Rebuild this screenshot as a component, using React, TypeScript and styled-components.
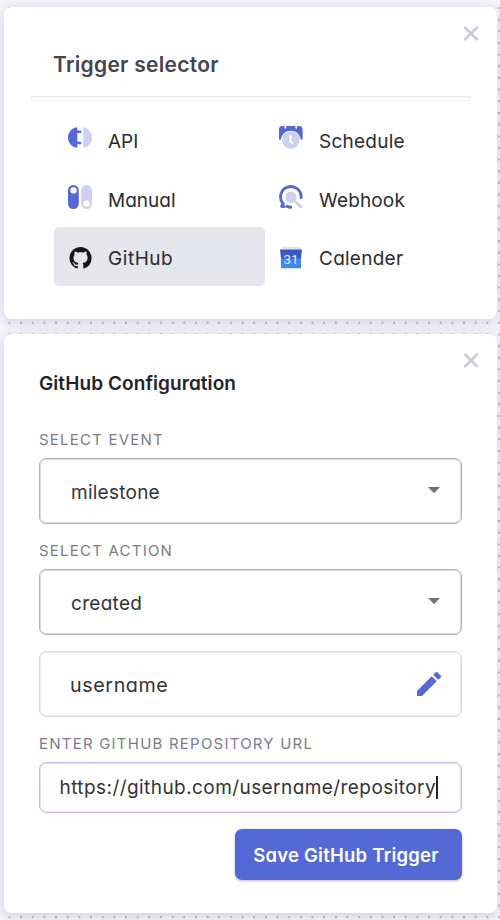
import React from "react";
import styled, { createGlobalStyle } from "styled-components";

const GlobalStyle = createGlobalStyle`
  *, *::before, *::after { box-sizing: border-box; }
  body {
    margin: 0;
    background: #f5f6fb;
    font-family: Inter, "Liberation Sans", sans-serif;
    font-feature-settings: "cv11" 1;
  }
`;

const Canvas = styled.main`
  width: 500px;
  height: 920px;
  overflow: hidden;
  padding: 7px 3px 0 4px;
  display: flex;
  flex-direction: column;
  gap: 15px;
  background-color: #f5f6fb;
  background-image: radial-gradient(circle, #a9a9b4 0.6px, transparent 1.1px);
  background-size: 11.67px 11.67px;
  background-position: 3.6px 2.2px;
`;

const Card = styled.section<{ $height: number; $pad: string }>`
  position: relative;
  flex: none;
  height: ${(p) => p.$height}px;
  padding: ${(p) => p.$pad};
  background: #fff;
  border-radius: 8px;
  box-shadow: 0 3px 13px rgba(50, 48, 95, 0.2);
  display: flex;
  flex-direction: column;
`;

const CloseButton = styled.button`
  position: absolute;
  top: 18px;
  right: 18px;
  width: 16px;
  height: 16px;
  padding: 0;
  border: 0;
  background: none;
  line-height: 0;
`;

const PanelTitle = styled.h1`
  margin: 0 0 0 22px;
  height: 30px;
  font-size: 21px;
  line-height: 30px;
  font-weight: 600;
  letter-spacing: 0.28px;
  color: #45444f;
`;

const Divider = styled.hr`
  width: 440px;
  height: 5px;
  margin: 16px 0 9.5px;
  border: 1px solid #f1f1f2;
  border-top: 2px solid #eeeeef;
  background: #fff;
`;

const TriggerGrid = styled.div`
  margin-left: 23px;
  display: grid;
  grid-template-columns: 211px 211px;
  grid-auto-rows: 58.4px;
`;

const TriggerItem = styled.button<{ $active?: boolean }>`
  display: flex;
  align-items: center;
  padding: 0 0 0 14px;
  gap: 16px;
  border: 0;
  border-radius: 5px;
  background: ${(p) => (p.$active ? "#e5e6eb" : "transparent")};
  font-family: inherit;
  font-feature-settings: inherit;
  text-align: left;
`;

const IconSlot = styled.span<{ $shift: number }>`
  width: 24px;
  height: 24px;
  line-height: 0;
  margin-top: ${(p) => p.$shift * 2}px;
`;

const TriggerName = styled.span<{ $track: number }>`
  font-size: 19px;
  line-height: 24px;
  margin-top: 5px;
  letter-spacing: ${(p) => p.$track}px;
  color: #2b2b31;
`;

const ConfigTitle = styled.h2`
  margin: 0;
  height: 24px;
  font-size: 19px;
  line-height: 24px;
  font-weight: 600;
  letter-spacing: 0.08px;
  color: #23232b;
`;

const FieldLabel = styled.label<{ $top: number }>`
  height: 16px;
  margin: ${(p) => p.$top}px 0 10px;
  font-size: 15px;
  line-height: 16px;
  letter-spacing: 1.22px;
  white-space: nowrap;
  color: #7b7c87;
`;

const FieldBox = styled.div<{ $tone: string; $inner: string; $height: number; $pad: string; $top?: number }>`
  flex: none;
  width: 423px;
  height: ${(p) => p.$height}px;
  margin-top: ${(p) => p.$top ?? 0}px;
  padding: ${(p) => p.$pad};
  display: flex;
  align-items: center;
  justify-content: space-between;
  border: 1px solid ${(p) => p.$tone};
  box-shadow: inset 0 0 0 1px ${(p) => p.$inner};
  border-radius: 7px;
`;

const FieldValue = styled.span<{ $track: number; $size?: number; $drop: number }>`
  display: flex;
  align-items: center;
  margin-top: ${(p) => p.$drop}px;
  font-size: ${(p) => p.$size ?? 19}px;
  line-height: 24px;
  letter-spacing: ${(p) => p.$track}px;
  white-space: nowrap;
  color: #333336;
`;

const Caret = styled.span`
  width: 1.5px;
  height: 23px;
  background: #222;
`;

const SaveButton = styled.button`
  align-self: flex-end;
  width: 227px;
  height: 51px;
  margin: 16px 0 0;
  padding: 0;
  border: 0;
  border-radius: 7px;
  background: #5468d6;
  box-shadow: 0 1px 3px rgba(50, 60, 130, 0.35);
  color: #fff;
  font-family: inherit;
  font-feature-settings: inherit;
  font-size: 18.5px;
  font-weight: 600;
  line-height: 24px;
  letter-spacing: 0.23px;
  text-indent: -5px;
  white-space: nowrap;
`;

const CloseIcon = () => (
  <svg width="16" height="16" viewBox="0 0 16 16" stroke="#c9cbdc" strokeWidth="2.7" strokeLinecap="round">
    <path d="M2.2 2.6 13.8 14.2M13.8 2.6 2.2 14.2" />
  </svg>
);

const ApiIcon = () => (
  <svg width="24" height="24" viewBox="0 0 24 24">
    <path
      fill="#5468d6"
      d="M9.3 1.2V4.5h3c.6 0 1 .4 1 1v.5c0 .6-.4 1-1 1h-3v8.7h3c.6 0 1 .4 1 1v.5c0 .6-.4 1-1 1h-3v3.6C4 21.3 0 17 0 11.5S4 1.7 9.3 1.2Z"
    />
    <path fill="#ccd0f2" d="M15.3 1.2c5 .8 8.7 4.8 8.7 10.3s-3.7 9.5-8.7 10.3Z" />
  </svg>
);

const ManualIcon = () => (
  <svg width="24" height="24" viewBox="0 0 24 24">
    <rect width="10.8" height="24" rx="5.4" fill="#5468d6" />
    <rect x="13.2" width="10.8" height="24" rx="5.4" fill="#ccd0f2" />
    <circle cx="5.5" cy="5.4" r="3.2" fill="#fff" />
    <circle cx="18.6" cy="18.6" r="3.2" fill="#fff" />
  </svg>
);

const GitHubIcon = () => (
  <svg width="24" height="24" viewBox="0 0 24 24">
    <path
      transform="translate(1.5 1) scale(1.38)"
      fill="#15151a"
      d="M8 0C3.58 0 0 3.58 0 8c0 3.54 2.29 6.53 5.47 7.59.4.07.55-.17.55-.38 0-.19-.01-.82-.01-1.49-2.01.37-2.53-.49-2.69-.94-.09-.23-.48-.94-.82-1.13-.28-.15-.68-.52-.01-.53.63-.01 1.08.58 1.23.82.72 1.21 1.87.87 2.33.66.07-.52.28-.87.51-1.07-1.78-.2-3.64-.89-3.64-3.95 0-.87.31-1.59.82-2.15-.08-.2-.36-1.02.08-2.12 0 0 .67-.21 2.2.82.64-.18 1.32-.27 2-.27s1.36.09 2 .27c1.53-1.04 2.2-.82 2.2-.82.44 1.1.16 1.92.08 2.12.51.56.82 1.27.82 2.15 0 3.07-1.87 3.75-3.65 3.95.29.25.54.73.54 1.48 0 1.07-.01 1.93-.01 2.2 0 .21.15.46.55.38A8.01 8.01 0 0 0 16 8c0-4.42-3.58-8-8-8Z"
    />
  </svg>
);

const ScheduleIcon = () => (
  <svg width="24" height="24" viewBox="0 0 24 24">
    <path
      fill="#5468d6"
      d="M3.3 0h2.2v1.9c0 1 1.7 1 1.7 0V0h9.2v1.9c0 1 1.7 1 1.7 0V0h2.3C22.5 0 23.6 1.3 23.6 3.3v9.6c0 1-1.8 1.3-2 .2C20.8 8 16.8 4.7 11.8 4.7S2.8 8 2 13.1c-.2 1.1-2 .8-2-.2V3.3C0 1.3 1.2 0 3.3 0Z"
    />
    <circle cx="11.8" cy="14" r="8.7" fill="#ccd0f2" />
    <path d="M11.5 10v5.5l1.8 1.5" fill="none" stroke="#fff" strokeWidth="2.2" strokeLinecap="round" strokeLinejoin="round" />
  </svg>
);

const WebhookIcon = () => (
  <svg width="24" height="24" viewBox="0 0 24 24" fill="none" strokeLinecap="round">
    <path d="M22.1 12.6A10.3 10.3 0 1 0 4.2 18.8L2.6 21.3" stroke="#5468d6" strokeWidth="2.9" />
    <path d="M3.6 21.7h2" stroke="#5468d6" strokeWidth="2.4" />
    <path d="M8.2 21.4c1.1.5 2.3.8 3.6.8" stroke="#5468d6" strokeWidth="2.9" />
    <circle cx="11.8" cy="12.2" r="5.7" fill="#ccd0f2" />
    <path d="m12.5 13 9.2 8.6" stroke="#ccd0f2" strokeWidth="3" />
  </svg>
);

const CalendarNumber = styled.text`
  font: 400 13.5px Roboto, sans-serif;
  letter-spacing: 0;
`;

const CalendarIcon = () => (
  <svg width="24" height="24" viewBox="0 0 24 24">
    <path fill="#e4e4e4" d="M2.7.8h18.6l1 3H1.7Z" />
    <path fill="#4285f4" d="M2 12h20v9.3c0 .6-.4 1-1 1H3c-.6 0-1-.4-1-1Z" />
    <path fill="#3a5bc0" d="M1 3.4h22L22 12.6H2Z" />
    <CalendarNumber x="12" y="17.7" textAnchor="middle" fill="#e4eafb">
      31
    </CalendarNumber>
  </svg>
);

const DropIcon = () => (
  <svg width="12" height="8" viewBox="0 0 12 8">
    <path fill="#737373" d="M0 0h12L6 6.2Z" />
  </svg>
);

const PencilIcon = () => (
  <svg width="24" height="24" viewBox="3 3 18 18" fill="#5468d6">
    <path d="M3 17.25V21h3.75L17.81 9.94l-3.75-3.75L3 17.25ZM20.71 7.04a1 1 0 0 0 0-1.41l-2.34-2.34a1 1 0 0 0-1.41 0l-1.83 1.83 3.75 3.75 1.83-1.83Z" />
  </svg>
);

const triggers = [
  { name: "API", Icon: ApiIcon, shift: -1.5, track: 0 },
  { name: "Schedule", Icon: ScheduleIcon, shift: -1.7, track: 0.25 },
  { name: "Manual", Icon: ManualIcon, shift: -1.5, track: 0 },
  { name: "Webhook", Icon: WebhookIcon, shift: -1.5, track: 0.15 },
  { name: "GitHub", Icon: GitHubIcon, shift: 1.4, track: 0.55, active: true },
  { name: "Calender", Icon: CalendarIcon, shift: 1.4, track: 0.25 },
];

const neutral = { $tone: "#b3b3ba", $inner: "#dcdce0" };
const pale = { $tone: "#d0d4f5", $inner: "#eaecfb" };
const focused = { $tone: "#b9c0f0", $inner: "#dde0f8" };

export default function App() {
  return (
    <>
      <GlobalStyle />
      <Canvas>
        <Card $height={312} $pad="43px 27px 0">
          <CloseButton aria-label="Close trigger selector">
            <CloseIcon />
          </CloseButton>
          <PanelTitle>Trigger selector</PanelTitle>
          <Divider />
          <TriggerGrid>
            {triggers.map(({ name, Icon, shift, track, active }) => (
              <TriggerItem key={name} $active={active}>
                <IconSlot $shift={shift}>
                  <Icon />
                </IconSlot>
                <TriggerName $track={track}>{name}</TriggerName>
              </TriggerItem>
            ))}
          </TriggerGrid>
        </Card>

        <Card $height={579} $pad="38px 35px 0">
          <CloseButton aria-label="Close configuration">
            <CloseIcon />
          </CloseButton>
          <ConfigTitle>GitHub Configuration</ConfigTitle>
          <FieldLabel $top={36}>SELECT EVENT</FieldLabel>
          <FieldBox {...neutral} $height={66} $pad="0 21px 0 31px">
            <FieldValue $track={0.25} $drop={3}>milestone</FieldValue>
            <DropIcon />
          </FieldBox>
          <FieldLabel $top={19}>SELECT ACTION</FieldLabel>
          <FieldBox {...neutral} $height={66} $pad="0 21px 0 31px">
            <FieldValue $track={0.3} $drop={3}>created</FieldValue>
            <DropIcon />
          </FieldBox>
          <FieldBox {...pale} $height={66} $top={16} $pad="0 20px 0 30px">
            <FieldValue $track={0.6} $size={19.7} $drop={1}>username</FieldValue>
            <PencilIcon />
          </FieldBox>
          <FieldLabel $top={19}>ENTER GITHUB REPOSITORY URL</FieldLabel>
          <FieldBox {...focused} $height={51} $pad="0 0 0 19.5px">
            <FieldValue $track={0.43} $drop={0}>
              https://github.com/username/repository
              <Caret />
            </FieldValue>
          </FieldBox>
          <SaveButton>Save GitHub Trigger</SaveButton>
        </Card>
      </Canvas>
    </>
  );
}
